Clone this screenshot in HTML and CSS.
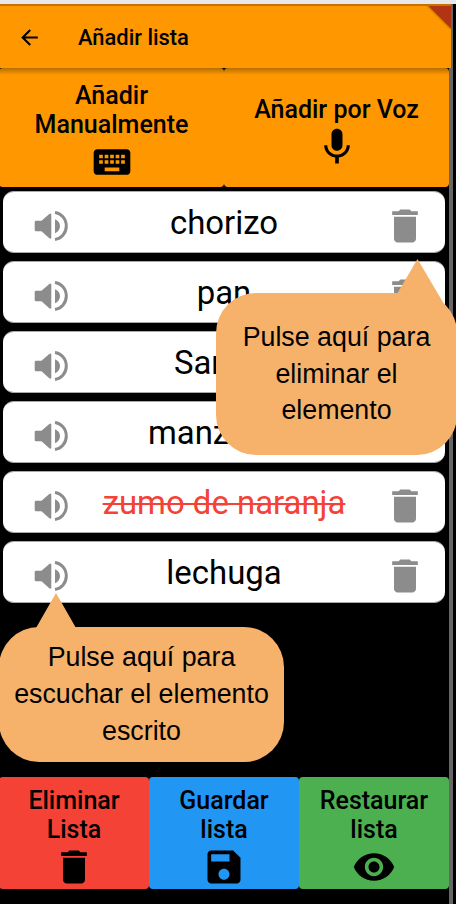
FILE: index.html
```html
<!DOCTYPE html>
<html lang="es">
<head>
<meta charset="utf-8">
<title>Añadir lista</title>
<link rel="stylesheet" href="styles.css">
</head>
<body>
<svg class="defs" width="0" height="0">
  <symbol id="delete" viewBox="0 0 24 24"><path d="M6 19c0 1.1.9 2 2 2h8c1.1 0 2-.9 2-2V7H6v12zM19 4h-3.500l-1-1h-5l-1 1H5v2h14V4z"/></symbol>
  <symbol id="volume" viewBox="0 0 34 32"><path d="M2 10.700h5.500l7.800-6.700q2-1.300 2 .8v22.600q0 2.100-2 .8L7.500 21.300H2q-1.300 0-1.300-1.300v-8q0-1.300 1.300-1.300zM21 9.300q5 2.200 5 6.900t-5 7.100z"/><path d="M21 2.600c6 .8 11.300 6 11.300 13.500S27 28.600 21 29.500" fill="none" stroke="currentColor" stroke-width="3"/></symbol>
</svg>
<div class="screen">
  <header class="appbar">
    <svg class="back" viewBox="0 0 24 24"><path d="M20 11H7.830l5.590-5.590L12 4l-8 8 8 8 1.410-1.410L7.830 13H20v-2z"/></svg>
    <h1 class="title">Añadir lista</h1>
    <span class="ribbon"></span>
  </header>
  <div class="add-actions">
    <button class="action orange"><span>Añadir<br>Manualmente</span>
      <svg class="icon" viewBox="0 0 24 24"><path d="M20 5H4c-1.100 0-1.990.9-1.990 2L2 17c0 1.100.9 2 2 2h16c1.100 0 2-.9 2-2V7c0-1.100-.9-2-2-2zm-9 3h2v2h-2V8zm0 3h2v2h-2v-2zM8 8h2v2H8V8zm0 3h2v2H8v-2zm-1 2H5v-2h2v2zm0-3H5V8h2v2zm9 7H8v-2h8v2zm0-4h-2v-2h2v2zm0-3h-2V8h2v2zm3 3h-2v-2h2v2zm0-3h-2V8h2v2z"/></svg></button>
    <button class="action orange"><span>Añadir por Voz</span>
      <svg class="icon" viewBox="0 0 24 24"><path d="M12 14c1.660 0 2.990-1.340 2.990-3L15 5c0-1.660-1.340-3-3-3S9 3.340 9 5v6c0 1.660 1.340 3 3 3zm5.300-3c0 3-2.540 5.100-5.300 5.100S6.700 14 6.700 11H5c0 3.410 2.720 6.230 6 6.720V21h2v-3.280c3.280-.48 6-3.300 6-6.720h-1.700z"/></svg></button>
  </div>
  <ul class="list">
    <li class="row"><svg class="volume"><use href="#volume"/></svg><span class="name">chorizo</span><svg class="delete"><use href="#delete"/></svg></li>
    <li class="row"><svg class="volume"><use href="#volume"/></svg><span class="name">pan</span><svg class="delete"><use href="#delete"/></svg></li>
    <li class="row"><svg class="volume"><use href="#volume"/></svg><span class="name">Sandía</span><svg class="delete"><use href="#delete"/></svg></li>
    <li class="row"><svg class="volume"><use href="#volume"/></svg><span class="name">manzanas</span><svg class="delete"><use href="#delete"/></svg></li>
    <li class="row"><svg class="volume"><use href="#volume"/></svg><span class="name done">zumo de naranja</span><svg class="delete"><use href="#delete"/></svg></li>
    <li class="row"><svg class="volume"><use href="#volume"/></svg><span class="name">lechuga</span><svg class="delete"><use href="#delete"/></svg></li>
  </ul>
  <footer class="list-actions">
    <button class="action red"><span>Eliminar<br>Lista</span><svg class="icon"><use href="#delete"/></svg></button>
    <button class="action blue"><span>Guardar<br>lista</span>
      <svg class="icon" viewBox="0 0 24 24"><path d="M17 3H5c-1.110 0-2 .9-2 2v14c0 1.100.89 2 2 2h14c1.100 0 2-.9 2-2V7l-4-4zm-5 16c-1.660 0-3-1.340-3-3s1.340-3 3-3 3 1.340 3 3-1.340 3-3 3zm3-10H5V5h10v4z"/></svg></button>
    <button class="action green"><span>Restaurar<br>lista</span>
      <svg class="icon" viewBox="0 0 24 24"><path d="M12 4.500C7 4.500 2.730 7.610 1 12c1.730 4.390 6 7.500 11 7.500s9.270-3.110 11-7.500c-1.730-4.390-6-7.500-11-7.500zM12 17c-2.760 0-5-2.240-5-5s2.240-5 5-5 5 2.240 5 5-2.240 5-5 5zm0-8c-1.660 0-3 1.340-3 3s1.340 3 3 3 3-1.340 3-3-1.340-3-3-3z"/></svg></button>
  </footer>
  <div class="callout callout-delete">
    <svg class="tail" viewBox="0 0 60 62"><path d="M0 35L20.500 0L57 62L0 62z"/></svg>
    <p>Pulse aquí para<br>eliminar el<br>elemento</p>
  </div>
  <div class="callout callout-listen">
    <svg class="tail" viewBox="0 0 40 36"><path d="M0 35L20 0L40 35z"/></svg>
    <p>Pulse aquí para<br>escuchar el elemento<br>escrito</p>
  </div>
</div>
</body>
</html>
```
FILE: styles.css
```css
* { box-sizing: border-box; }
body { margin: 0; background: #000; overflow: hidden; }
.defs { display: block; }
.screen {
  position: relative;
  width: 456px;
  height: 904px;
  overflow: hidden;
  display: flex;
  flex-direction: column;
  border-top: 4px solid #e8e8ec;
  background: linear-gradient(90deg, #000 449px, #666 449px, #666 453px, #000 453px);
  font-family: Roboto, sans-serif;
  color: #000;
}
.appbar {
  position: relative;
  z-index: 1;
  flex: none;
  width: 451px;
  height: 64px;
  padding: 1px 0 0 17px;
  display: flex;
  align-items: center;
  overflow: hidden;
  background: #ff9800;
  border-top: 2px solid #c27400;
}
.back { width: 25px; height: 25px; flex: none; }
.title { margin: 0 0 0 36px; font-size: 21.900px; font-weight: 500; line-height: 30px; }
.ribbon {
  position: absolute;
  top: -2px;
  right: 0;
  width: 25px;
  height: 25px;
  background: linear-gradient(45deg, transparent 44%, rgba(120,60,0,.4) 51%, #b23415 52%);
}
.add-actions {
  display: flex;
  flex: none;
  width: 450px;
  height: 119px;
  margin-left: -1px;
  position: relative;
}
.add-actions::before {
  content: "";
  position: absolute;
  inset: 0 0 auto;
  height: 7px;
  background: linear-gradient(rgba(0,0,0,.28), transparent);
}
.action {
  flex: 1 1 0;
  min-width: 0;
  margin: 0;
  padding: 9px 0 0;
  border: 0;
  border-radius: 4px;
  display: flex;
  flex-direction: column;
  align-items: center;
  justify-content: center;
  font: 500 25px/29.500px Roboto, sans-serif;
  color: #000;
  text-align: center;
}
.icon { width: 44px; height: 44px; flex: none; }
.orange { background: #ff9800; }
.red { background: #f44336; }
.blue { background: #2196f3; }
.green { background: #4caf50; }
.list {
  list-style: none;
  margin: 4px 0 0 3px;
  padding: 0;
  width: 442px;
  display: flex;
  flex-direction: column;
  gap: 8.100px;
}
.row {
  height: 62px;
  padding: 0 18px 0 31px;
  display: flex;
  align-items: center;
  background: #fff;
  border: 1px solid #aaa;
  border-width: 1px 0;
  border-radius: 11px;
}
.volume, .delete { flex: none; color: #8c8c8c; fill: #8c8c8c; position: relative; top: 4px; }
.volume { width: 34px; height: 32px; }
.delete { width: 44px; height: 44px; }
.name {
  flex: 1;
  padding: 2px 3px 0 0;
  text-align: center;
  font-size: 32.900px;
  line-height: 40px;
  white-space: nowrap;
}
.done { color: #f44336; text-decoration: line-through; text-decoration-thickness: 2px; }
.list-actions {
  display: flex;
  width: 450px;
  height: 112px;
  margin: auto 0 15px -1px;
  flex: none;
}
.list-actions .action { padding-top: 8px; }
.callout {
  position: absolute;
  z-index: 2;
  display: flex;
  align-items: center;
  justify-content: center;
  background: #f6b26b;
  border-radius: 40px;
  font: 26.800px/36.700px "Liberation Sans", sans-serif;
  text-align: center;
}
.callout p { margin: 0; position: relative; white-space: nowrap; }
.callout-delete { left: 216px; top: 289px; width: 241px; height: 162px; }
.callout-listen { left: -1px; top: 623px; width: 285px; height: 135px; }
.tail { position: absolute; fill: #f6b26b; }
.callout-delete .tail { left: 181px; top: -34px; width: 60px; height: 62px; }
.callout-listen .tail { left: 37px; top: -34px; width: 40px; height: 36px; }
```
